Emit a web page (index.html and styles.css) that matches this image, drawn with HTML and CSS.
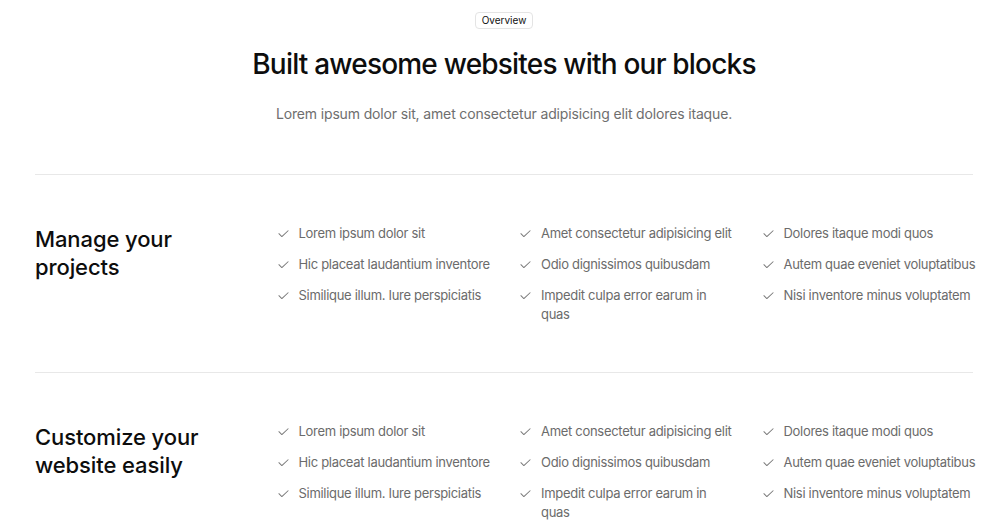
FILE: index.html
```html
<!DOCTYPE html>
<html lang="en">
<head>
<meta charset="utf-8">
<title>Overview</title>
<link rel="stylesheet" href="styles.css">
</head>
<body>
<main class="page">
  <header class="intro">
    <span class="badge">Overview</span>
    <h1 class="title">Built awesome websites with our blocks</h1>
    <p class="lead">Lorem ipsum dolor sit, amet consectetur adipisicing elit dolores itaque.</p>
  </header>

  <section class="block">
    <h2 class="block-title">Manage your projects</h2>
    <ul class="list">
      <li><svg class="check" viewBox="0 0 12 12"><path d="M1 6.2l3.2 3.1L11 3"/></svg><span>Lorem ipsum dolor sit</span></li>
      <li><svg class="check" viewBox="0 0 12 12"><path d="M1 6.2l3.2 3.1L11 3"/></svg><span>Hic placeat laudantium inventore</span></li>
      <li><svg class="check" viewBox="0 0 12 12"><path d="M1 6.2l3.2 3.1L11 3"/></svg><span>Similique illum. Iure perspiciatis</span></li>
    </ul>
    <ul class="list">
      <li><svg class="check" viewBox="0 0 12 12"><path d="M1 6.2l3.2 3.1L11 3"/></svg><span>Amet consectetur adipisicing elit</span></li>
      <li><svg class="check" viewBox="0 0 12 12"><path d="M1 6.2l3.2 3.1L11 3"/></svg><span>Odio dignissimos quibusdam</span></li>
      <li><svg class="check" viewBox="0 0 12 12"><path d="M1 6.2l3.2 3.1L11 3"/></svg><span>Impedit culpa error earum in quas</span></li>
    </ul>
    <ul class="list">
      <li><svg class="check" viewBox="0 0 12 12"><path d="M1 6.2l3.2 3.1L11 3"/></svg><span>Dolores itaque modi quos</span></li>
      <li><svg class="check" viewBox="0 0 12 12"><path d="M1 6.2l3.2 3.1L11 3"/></svg><span>Autem quae eveniet voluptatibus</span></li>
      <li><svg class="check" viewBox="0 0 12 12"><path d="M1 6.2l3.2 3.1L11 3"/></svg><span>Nisi inventore minus voluptatem</span></li>
    </ul>
  </section>

  <section class="block">
    <h2 class="block-title">Customize your website easily</h2>
    <ul class="list">
      <li><svg class="check" viewBox="0 0 12 12"><path d="M1 6.2l3.2 3.1L11 3"/></svg><span>Lorem ipsum dolor sit</span></li>
      <li><svg class="check" viewBox="0 0 12 12"><path d="M1 6.2l3.2 3.1L11 3"/></svg><span>Hic placeat laudantium inventore</span></li>
      <li><svg class="check" viewBox="0 0 12 12"><path d="M1 6.2l3.2 3.1L11 3"/></svg><span>Similique illum. Iure perspiciatis</span></li>
    </ul>
    <ul class="list">
      <li><svg class="check" viewBox="0 0 12 12"><path d="M1 6.2l3.2 3.1L11 3"/></svg><span>Amet consectetur adipisicing elit</span></li>
      <li><svg class="check" viewBox="0 0 12 12"><path d="M1 6.2l3.2 3.1L11 3"/></svg><span>Odio dignissimos quibusdam</span></li>
      <li><svg class="check" viewBox="0 0 12 12"><path d="M1 6.2l3.2 3.1L11 3"/></svg><span>Impedit culpa error earum in quas</span></li>
    </ul>
    <ul class="list">
      <li><svg class="check" viewBox="0 0 12 12"><path d="M1 6.2l3.2 3.1L11 3"/></svg><span>Dolores itaque modi quos</span></li>
      <li><svg class="check" viewBox="0 0 12 12"><path d="M1 6.2l3.2 3.1L11 3"/></svg><span>Autem quae eveniet voluptatibus</span></li>
      <li><svg class="check" viewBox="0 0 12 12"><path d="M1 6.2l3.2 3.1L11 3"/></svg><span>Nisi inventore minus voluptatem</span></li>
    </ul>
  </section>
</main>
</body>
</html>
```

FILE: styles.css
```css
* { box-sizing: border-box; }

body {
  margin: 0;
  background: #ffffff;
  font-family: Inter, "Noto Sans", "Liberation Sans", sans-serif;
  color: #111111;
}

.page {
  padding: 0 27px 0 35px;
}

.intro {
  display: flex;
  flex-direction: column;
  align-items: center;
  padding: 12px 0 48px;
}

.badge {
  display: inline-block;
  font-size: 10px;
  line-height: 15px;
  padding: 0 6px;
  border: 1px solid #e4e4e4;
  border-radius: 4px;
  color: #111;
}

.title {
  margin: 17px 0 0;
  font-size: 28px;
  line-height: 36px;
  font-weight: 500;
  letter-spacing: -0.8px;
  color: #0d0d0d;
}

.lead {
  margin: 20px 0 0;
  font-size: 14px;
  line-height: 24px;
  letter-spacing: -0.15px;
  color: #6e6e6e;
}

.block {
  display: grid;
  grid-template-columns: repeat(4, 1fr);
  column-gap: 32px;
  border-top: 1px solid #e8e8e8;
  padding: 49px 0 48px;
}

.block-title {
  margin: 1px 0 0;
  font-size: 22px;
  line-height: 28px;
  font-weight: 500;
  letter-spacing: -0.1px;
  color: #0d0d0d;
}

.list {
  list-style: none;
  margin: 0 -5px 0 0;
  padding: 0;
  display: flex;
  flex-direction: column;
  gap: 12px;
}

.list li {
  display: flex;
  align-items: flex-start;
  gap: 10px;
  font-size: 13px;
  line-height: 19px;
  letter-spacing: -0.3px;
  color: #6b6b6b;
}

.check {
  flex: none;
  width: 11px;
  height: 11px;
  margin-top: 4px;
  fill: none;
  stroke: #7a7a7a;
  stroke-width: 1.1;
  stroke-linecap: round;
  stroke-linejoin: round;
}
```
